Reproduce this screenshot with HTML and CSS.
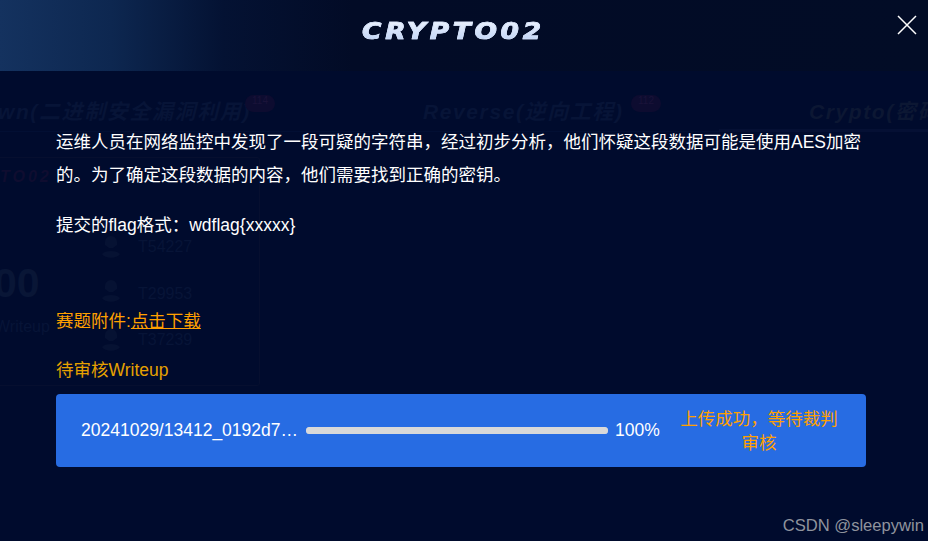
FILE: index.html
```html
<!DOCTYPE html>
<html lang="zh-CN">
  <head>
    <meta charset="UTF-8" />
    <title>CRYPTO02</title>
    <link rel="stylesheet" href="styles.css">
  </head>
  <body>
    <!-- page behind the dialog, barely visible -->
    <div class="ghost" aria-hidden="true">
      <span class="ghost-tab tab-pwn">wn(二进制安全漏洞利用)</span>
      <span class="ghost-badge badge-pwn">114</span>
      <span class="ghost-tab tab-rev">Reverse(逆向工程)</span>
      <span class="ghost-badge badge-rev">112</span>
      <span class="ghost-tab tab-crypto">Crypto(密码</span>
      <div class="ghost-line"></div>
      <div class="ghost-line-active"></div>
      <div class="ghost-card"></div>
      <span class="ghost-name">TO02</span>
      <span class="ghost-score">00</span>
      <span class="ghost-wp">核Writeup</span>
      <span class="ghost-team team-1">T54227</span>
      <span class="ghost-team team-2">T29953</span>
      <span class="ghost-team team-3">T37239</span>
      <svg class="ghost-icon icon-1" viewBox="0 0 24 24"><path d="M12 1a6 6 0 0 1 6 6v3l-4 3h-4l-4-3V7a6 6 0 0 1 6-6zM3 19c3-4 15-4 18 0-3 5-15 5-18 0z" /></svg>
      <svg class="ghost-icon icon-2" viewBox="0 0 24 24"><path d="M12 1a6 6 0 0 1 6 6v3l-4 3h-4l-4-3V7a6 6 0 0 1 6-6zM3 19c3-4 15-4 18 0-3 5-15 5-18 0z" /></svg>
      <svg class="ghost-icon icon-3" viewBox="0 0 24 24"><path d="M12 1a6 6 0 0 1 6 6v3l-4 3h-4l-4-3V7a6 6 0 0 1 6-6zM3 19c3-4 15-4 18 0-3 5-15 5-18 0z" /></svg>
    </div>

    <div class="dialog">
      <div class="dialog-header">
        <h1 class="dialog-title">CRYPTO02</h1>
        <button class="close-btn" aria-label="关闭">
          <svg viewBox="0 0 20 20" width="20" height="20"><path d="M1 1l18 18M19 1L1 19" /></svg>
        </button>
      </div>

      <div class="dialog-body">
        <p class="desc">运维人员在网络监控中发现了一段可疑的字符串，经过初步分析，他们怀疑这段数据可能是使用AES加密的。为了确定这段数据的内容，他们需要找到正确的密钥。</p>
        <p class="flag-format">提交的flag格式：wdflag{xxxxx}</p>
        <p class="attachment">赛题附件:<a href="#">点击下载</a></p>
        <p class="wp-title">待审核Writeup</p>
        <div class="upload-row">
          <span class="file-name">20241029/13412_0192d7c3f1a8.zip</span>
          <div class="progress"><div class="progress-bar" style="width: 100%"></div></div>
          <span class="percent">100%</span>
          <span class="upload-status">上传成功，等待裁判审核</span>
        </div>
      </div>
    </div>

    <div class="watermark">CSDN @sleepywin</div>
  </body>
</html>
```

FILE: styles.css
```css
html,
body {
  height: 100%;
}

body {
  margin: 0;
  overflow: hidden;
  position: relative;
  background-color: #000b2d;
  color: white;
  font-family: "Liberation Sans", "Noto Sans CJK SC", sans-serif;
}

.dialog {
  position: relative;
  display: flex;
  flex-direction: column;
  height: 100%;
}

.dialog-header {
  position: relative;
  display: flex;
  align-items: center;
  justify-content: center;
  height: 71px;
  flex-shrink: 0;
  background: linear-gradient(90deg, #14325f 0%, #0d2750 12%, #041233 24%, #020b26 38%, #020c26 100%);
}

.dialog-title {
  margin: 0 22px 10px 0;
  font-family: "DejaVu Sans", sans-serif;
  font-size: 23px;
  font-weight: bold;
  font-style: italic;
  letter-spacing: 3.2px;
  transform: scaleX(1.15);
  background: linear-gradient(180deg, #f2f6ff, #b9cff5);
  -webkit-background-clip: text;
  background-clip: text;
  color: transparent;
  -webkit-text-stroke: 0.7px #d6e3fb;
}

.close-btn {
  position: absolute;
  top: 15px;
  right: 11px;
  padding: 0;
  width: 20px;
  height: 20px;
  background: none;
  border: none;
  cursor: pointer;
}

.close-btn svg {
  display: block;
  fill: none;
  stroke: white;
  stroke-width: 1.5;
}

.dialog-body {
  padding: 55px 62px 0 56px;
  font-size: 17.5px;
}

.desc {
  margin: 0;
  line-height: 33px;
}

.flag-format {
  margin: 17px 0 0;
  line-height: 33px;
}

.attachment {
  margin: 63px 0 0;
  line-height: 33px;
  color: #ffa000;
}

.attachment a {
  color: #ffa000;
}

.wp-title {
  margin: 16px 0 0;
  line-height: 33px;
  color: #e6a100;
}

.upload-row {
  display: flex;
  align-items: center;
  height: 73px;
  margin-top: 7px;
  padding: 0 25px;
  border-radius: 4px;
  background-color: #276ce3;
  box-sizing: border-box;
}

.file-name {
  width: 218px;
  flex-shrink: 0;
  overflow: hidden;
  white-space: nowrap;
  text-overflow: ellipsis;
  font-size: 17.5px;
}

.progress {
  width: 302px;
  height: 7px;
  margin-left: 7px;
  flex-shrink: 0;
  border-radius: 4px;
  background-color: #9db9ea;
}

.progress-bar {
  height: 100%;
  border-radius: 4px;
  background-color: #d9d9d9;
}

.percent {
  width: 60px;
  margin-left: 7px;
  flex-shrink: 0;
  font-size: 17.5px;
}

.upload-status {
  width: 166px;
  margin-left: 1px;
  flex-shrink: 0;
  text-align: center;
  font-size: 17.5px;
  line-height: 24px;
  color: #ffa000;
}

.watermark {
  position: absolute;
  right: 4px;
  bottom: 5px;
  font-size: 16.6px;
  color: #8f939d;
}

/* ghost page */
.ghost {
  position: absolute;
  top: 0;
  left: 0;
  width: 100%;
  height: 100%;
  overflow: hidden;
  white-space: nowrap;
  color: #071437;
}

.ghost span {
  position: absolute;
}

.ghost-tab {
  top: 95px;
  font-size: 21px;
  font-weight: bold;
  font-style: italic;
  letter-spacing: 1.6px;
}

.tab-pwn {
  left: -2px;
}

.tab-rev {
  left: 423px;
}

.tab-crypto {
  left: 809px;
  color: #0c1733;
}

.ghost-badge {
  top: 95px;
  width: 30px;
  height: 17px;
  border-radius: 9px;
  background-color: #0d0c30;
  color: #1a1339;
  font-size: 10px;
  text-align: center;
}

.badge-pwn {
  left: 245px;
}

.badge-rev {
  left: 631px;
}

.ghost-line {
  position: absolute;
  top: 131px;
  left: 0;
  width: 719px;
  height: 1px;
  background-color: #020f33;
}

.ghost-line-active {
  position: absolute;
  top: 129px;
  left: 719px;
  right: 0;
  height: 3px;
  background-color: #051034;
}

.ghost-card {
  position: absolute;
  top: 157px;
  left: -10px;
  width: 268px;
  height: 227px;
  border: 1px solid #060f2f;
  border-radius: 3px;
}

.ghost-name {
  top: 168px;
  left: 0;
  font-size: 16px;
  font-weight: bold;
  font-style: italic;
  letter-spacing: 3px;
  color: #0f0d30;
}

.ghost-score {
  top: 260px;
  left: -6px;
  font-size: 41px;
  font-weight: bold;
  color: #091636;
}

.ghost-wp {
  top: 313px;
  left: -21px;
  font-size: 16px;
}

.ghost-team {
  left: 138px;
  font-size: 16px;
}

.team-1 {
  top: 238px;
}

.team-2 {
  top: 285px;
}

.team-3 {
  top: 331px;
}

.ghost-icon {
  position: absolute;
  left: 99px;
  width: 24px;
  height: 24px;
  fill: #061233;
}

.icon-1 {
  top: 235px;
}

.icon-2 {
  top: 279px;
}

.icon-3 {
  top: 328px;
}
```
